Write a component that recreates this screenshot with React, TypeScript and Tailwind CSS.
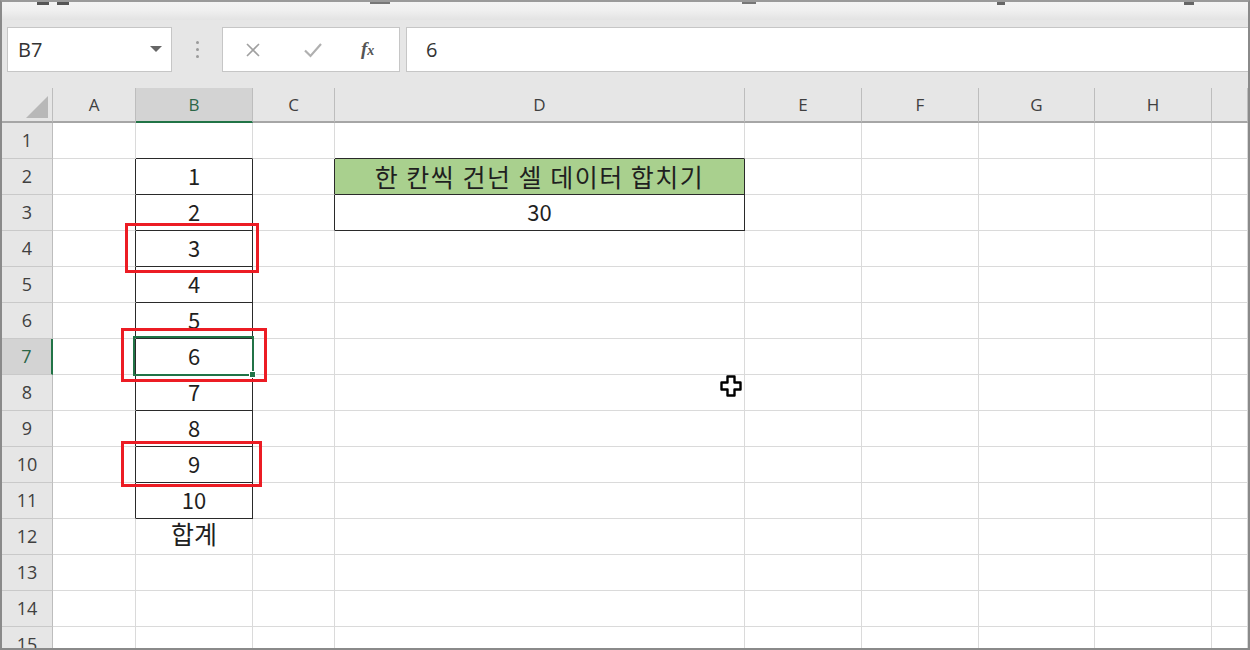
import React from "react";

const UI_FONT = { fontFamily: '"Open Sans", "Noto Sans", sans-serif' };
const CELL_FONT = { fontFamily: '"Noto Sans CJK KR", "Noto Sans", sans-serif' };

// sheet columns, widths include the right gridline
const cols = [
    { key: "A", w: "w-[83px]" },
    { key: "B", w: "w-[117px]" },
    { key: "C", w: "w-[82px]" },
    { key: "D", w: "w-[410px]" },
    { key: "E", w: "w-[117px]" },
    { key: "F", w: "w-[117px]" },
    { key: "G", w: "w-[116px]" },
    { key: "H", w: "w-[117px]" },
    { key: "I", w: "flex-1" },
];

const values: Record<string, string> = {
    B2: "1", B3: "2", B4: "3", B5: "4", B6: "5", B7: "6", B8: "7", B9: "8", B10: "9", B11: "10",
    B12: "합계",
    D2: "한 칸씩 건넌 셀 데이터 합치기",
    D3: "30",
};

const isBoxed = (col: string | undefined, row: number) => {
    if (!col) return false;
    if (col === "B") return row >= 2 && row <= 11;
    if (col === "D") return row === 2 || row === 3;
    return false;
};

const rows = Array.from({ length: 15 }, (_, i) => i + 1);

function TopStrip() {
    return (
        <div className="relative h-[18px] shrink-0 bg-linear-to-b from-[#f4f4f4] via-[#efefef] to-[#e3e3e3]">
            <div className="absolute top-0 left-[35px] w-[12px] h-[3px] bg-[#555]" />
            <div className="absolute top-0 left-[55px] w-[12px] h-[3px] bg-[#555]" />
            <div className="absolute top-0 left-[368px] w-[20px] h-[2px] bg-[#777]" />
            <div className="absolute top-0 left-[740px] w-[14px] h-[2px] bg-[#777]" />
            <div className="absolute top-0 left-[995px] w-[8px] h-[3px] bg-[#666]" />
            <div className="absolute top-0 left-[1182px] w-[10px] h-[3px] bg-[#666]" />
        </div>
    );
}

function FormulaBar() {
    return (
        <div className="h-[68px] shrink-0 pt-[7px] flex items-start bg-[#e6e6e6]" style={UI_FONT}>
            {/* name box */}
            <div className="ml-[5px] w-[165px] h-[45px] border border-[#c6c6c6] bg-white flex items-center justify-between pl-[10px] pr-[9px]">
                <span className="text-[20px] text-[#333]">B7</span>
                <svg width="12" height="7" viewBox="0 0 12 7">
                    <polygon points="0,0 12,0 6,6" fill="#666" />
                </svg>
            </div>
            {/* grip dots */}
            <div className="w-[50px] h-[45px] flex flex-col items-center justify-center gap-[4px]">
                <span className="w-[3px] h-[3px] rounded-full bg-[#9a9a9a]" />
                <span className="w-[3px] h-[3px] rounded-full bg-[#9a9a9a]" />
                <span className="w-[3px] h-[3px] rounded-full bg-[#9a9a9a]" />
            </div>
            {/* cancel / enter / fx */}
            <div className="w-[178px] h-[45px] border border-[#c6c6c6] bg-white flex items-center">
                <svg className="ml-[22px]" width="16" height="16" viewBox="0 0 16 16">
                    <path d="M2 2 L14 14 M14 2 L2 14" stroke="#a0a0a0" strokeWidth="1.6" fill="none" />
                </svg>
                <svg className="ml-[42px]" width="20" height="16" viewBox="0 0 20 16">
                    <path d="M2 8.5 L7.5 14 L18 2" stroke="#b0b0b0" strokeWidth="2.2" fill="none" />
                </svg>
                <span className="ml-[38px] text-[19px] italic font-bold text-[#555]" style={{ fontFamily: '"Liberation Serif", serif' }}>
                    f<span className="text-[14px]">x</span>
                </span>
            </div>
            {/* formula input */}
            <div className="ml-[6px] flex-1 h-[45px] border border-r-0 border-[#c6c6c6] bg-white flex items-center pl-[19px]">
                <span className="text-[20px] text-[#333]">6</span>
            </div>
        </div>
    );
}

function HeaderRow() {
    return (
        <div className="flex h-[35px] shrink-0 bg-[#e6e6e6]" style={UI_FONT}>
            <div className="w-[51px] border-r border-[#bdbdbd] border-b-2 border-b-[#a6a6a6] flex items-end justify-end pr-[4px] pb-[3px]">
                <svg width="22" height="22" viewBox="0 0 22 22">
                    <polygon points="22,0 22,22 0,22" fill="#b8b8b8" />
                </svg>
            </div>
            {cols.map((c) =>
                c.key === "B" ? (
                    <div
                        key={c.key}
                        className={`${c.w} bg-[#d3d3d3] border-r border-[#bdbdbd] border-b-2 border-b-[#217346] flex items-center justify-center text-[17px] text-[#2c6647]`}
                    >
                        {c.key}
                    </div>
                ) : (
                    <div
                        key={c.key}
                        className={`${c.w} border-r border-[#bdbdbd] border-b-2 border-b-[#a6a6a6] flex items-center justify-center text-[17px] text-[#404040]`}
                    >
                        {c.key === "I" ? "" : c.key}
                    </div>
                )
            )}
        </div>
    );
}

function Cell({ col, row, w, nextCol }: { col: string; row: number; w: string; nextCol?: string }) {
    const id = `${col}${row}`;
    const boxed = isBoxed(col, row);
    const darkRight = boxed || isBoxed(nextCol, row);
    const darkBottom = boxed || isBoxed(col, row + 1);
    const green = id === "D2";

    let textCls = "text-[22px] pb-[3px]";
    if (id === "D2") textCls = "text-[25px] tracking-[1.5px]";
    if (id === "B12") textCls = "text-[25px] pb-[6px]";

    return (
        <div
            className={`relative ${w} h-full border-r border-b ${darkRight ? "border-r-[#2a2a2a]" : "border-r-[#dadada]"} ${
                darkBottom ? "border-b-[#2a2a2a]" : "border-b-[#dadada]"
            } ${green ? "bg-[#a9d08e]" : "bg-white"} flex items-center justify-center leading-none text-[#1f1f1f] ${textCls}`}
            style={CELL_FONT}
        >
            {values[id] && <span>{values[id]}</span>}

            {id === "B4" && (
                <div className="absolute z-20 -left-[11px] -right-[7px] -top-[8px] -bottom-[7px] border-[3px] border-[#ec1c24] pointer-events-none" />
            )}
            {id === "B7" && (
                <>
                    <div className="absolute z-20 -left-[3px] -right-[2px] -top-[3px] -bottom-[2px] border-2 border-[#217346] pointer-events-none" />
                    <div className="absolute z-30 -right-[4px] -bottom-[4px] w-[7px] h-[7px] bg-[#217346] border border-white" />
                    <div className="absolute z-20 -left-[15px] -right-[15px] -top-[11px] -bottom-[8px] border-[3px] border-[#ec1c24] pointer-events-none" />
                </>
            )}
            {id === "B10" && (
                <div className="absolute z-20 -left-[15px] -right-[10px] -top-[6px] -bottom-[5px] border-[3px] border-[#ec1c24] pointer-events-none" />
            )}
        </div>
    );
}

function Row({ row }: { row: number }) {
    const selected = row === 7;
    return (
        <div className="flex h-[36px] shrink-0">
            <div
                className={`w-[51px] border-b border-[#c9c9c9] flex items-center justify-center text-[18px] ${
                    selected ? "bg-[#d3d3d3] border-r-2 border-r-[#217346] text-[#2c6647]" : "bg-[#e6e6e6] border-r border-r-[#bdbdbd] text-[#404040]"
                }`}
                style={UI_FONT}
            >
                {row}
            </div>
            {cols.map((c, i) => (
                <Cell key={c.key} col={c.key} row={row} w={c.w} nextCol={cols[i + 1]?.key} />
            ))}
        </div>
    );
}

function MoveCursor() {
    return (
        <svg className="absolute left-[717px] top-[372px] z-40" width="24" height="24" viewBox="0 0 24 24">
            <path
                d="M8.5 2.5 H15.5 V8.5 H21.5 V15.5 H15.5 V21.5 H8.5 V15.5 H2.5 V8.5 H8.5 Z"
                fill="white"
                stroke="black"
                strokeWidth="2.4"
                strokeLinejoin="round"
            />
        </svg>
    );
}

export default function App() {
    return (
        <div className="relative w-[1250px] h-[650px] overflow-hidden border-2 border-[#8a8a8a] border-t-[#9a9a9a] bg-[#e6e6e6] flex flex-col">
            <TopStrip />
            <FormulaBar />
            <div className="flex flex-col flex-1 overflow-hidden bg-white">
                <HeaderRow />
                {rows.map((r) => (
                    <Row key={r} row={r} />
                ))}
            </div>
            <MoveCursor />
        </div>
    );
}
